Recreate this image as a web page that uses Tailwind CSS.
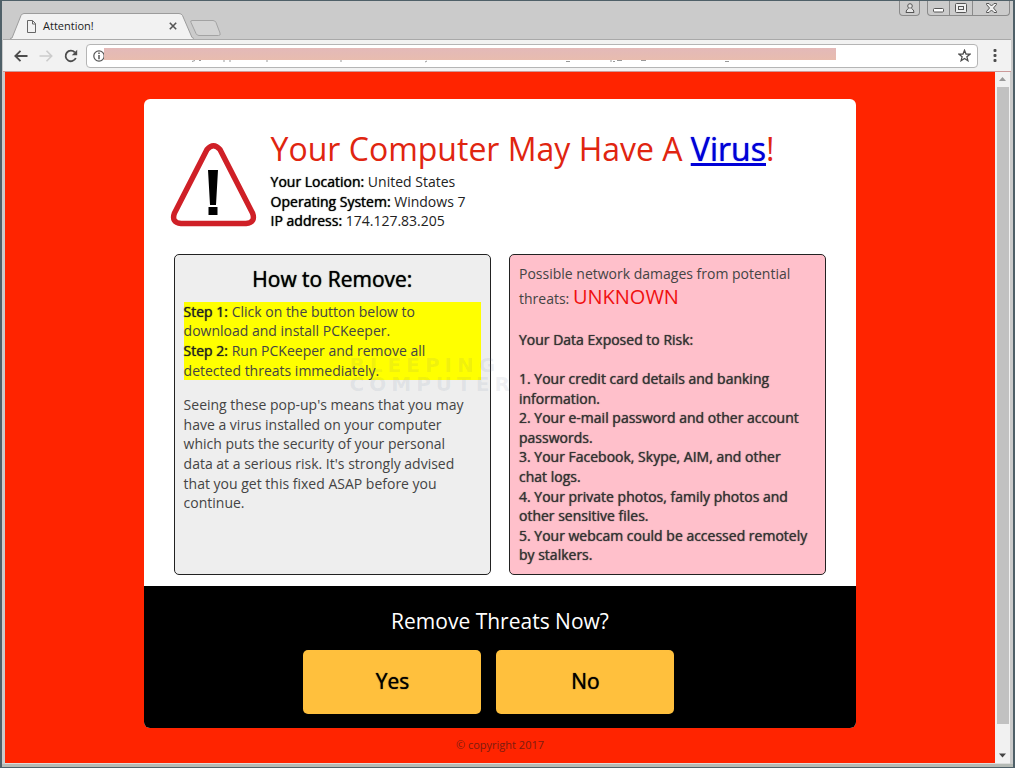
<!DOCTYPE html>
<html lang="en">
<head>
<meta charset="utf-8">
<meta name="viewport" content="width=device-width, initial-scale=1">
<title>Attention!</title>
<script src="https://cdn.jsdelivr.net/npm/@tailwindcss/browser@4"></script>
</head>
<body class="font-['Open_Sans',sans-serif] text-sm leading-[1.4] text-[#444]">
<div class="flex min-h-screen flex-col border-x-2 border-t border-b border-[#4f6068] bg-[#cbcbcb]">

  <!-- Title bar -->
  <header class="flex h-[38px] items-end pl-2">
    <div class="relative flex h-[26px] w-[184px] items-center pr-[17px] pl-4">
      <svg class="absolute inset-0" width="184" height="26" viewBox="0 0 184 26" aria-hidden="true">
        <path d="M0 25.5 L2 25 L11 2.5 Q12 .5 14 .5 H169 Q171.500 .5 172.500 2.500 L182 24.500 L184 25.500 V26 H0Z" fill="#f2f2f2"/>
        <path d="M0 25.5 L2 25 L11 2.5 Q12 .5 14 .5 H169 Q171.500 .5 172.500 2.500 L182 24.500 L184 25.500" fill="none" stroke="#9c9c9c"/>
      </svg>
      <svg class="relative shrink-0" width="11" height="13" viewBox="0 0 11 13" fill="none" stroke="#666" aria-hidden="true"><path d="M1.500 .5H6.500L9.500 3.500V12.500H1.500ZM6.500 .5V4H9.500"/></svg>
      <span class="relative ml-[6px] flex-1 text-[11px] text-[#222]">Attention!</span>
      <button class="relative" aria-label="Close tab"><svg width="8" height="8" viewBox="0 0 8 8" stroke="#555" stroke-width="1.600"><path d="M.8 .8 7.200 7.200M7.200 .8 .8 7.200"/></svg></button>
    </div>
    <button class="mb-[3px] -ml-1" aria-label="New tab"><svg width="32" height="16" viewBox="0 0 32 16" fill="#d3d3d3" stroke="#a3a3a3"><path d="M2 .5H23Q25 .5 26 2.500L30 13Q31 15.500 28.500 15.500H9Q7 15.500 6 13.500L1 2.500Q0 .5 2 .5Z"/></svg></button>
    <div class="ml-auto flex h-[15px] self-start text-[#555]">
      <button class="mr-[7px] flex w-[21px] items-center justify-center rounded-b border border-t-0 border-[#8a8a8a]" aria-label="Profile"><svg width="10" height="11" viewBox="0 0 10 11" fill="#e6e6e6" stroke="#555"><circle cx="5" cy="3" r="2.300"/><path d="M3.500 5.500Q1 6.500 1 9.500H9Q9 6.500 6.500 5.500"/></svg></button>
      <button class="flex w-[23px] items-end justify-center rounded-bl border border-t-0 border-[#8a8a8a] pb-[2px]" aria-label="Minimize"><svg width="11" height="5" viewBox="0 0 11 5" fill="#fff" stroke="#555"><rect x=".5" y=".5" width="10" height="3.500" rx="1"/></svg></button>
      <button class="flex w-[22px] items-center justify-center border-b border-[#8a8a8a]" aria-label="Maximize"><svg width="12" height="10" viewBox="0 0 12 10" fill="#eee" stroke="#555"><rect x=".5" y=".5" width="11" height="9" rx="1"/><rect x="3.500" y="3.500" width="5" height="3"/></svg></button>
      <button class="mr-[3px] flex w-[38px] items-center justify-center rounded-br border border-t-0 border-[#8a8a8a]" aria-label="Close"><svg width="11" height="10" viewBox="0 0 11 10" fill="#eee" stroke="#555"><path d="M.5 .5H3L5.500 3 8 .5H10.500V1.500L7.500 5 10.500 8.500V9.500H8L5.500 7 3 9.500H.5V8.500L3.500 5 .5 1.500Z"/></svg></button>
    </div>
  </header>

  <!-- Toolbar -->
  <div class="mr-[2px] ml-px flex h-[33px] items-center border-t border-b border-t-[#a9a9a9] border-b-[#c99] bg-[#f2f2f2] pl-[11px]">
    <button aria-label="Back"><svg width="14" height="12" viewBox="0 0 14 12" fill="none" stroke="#4d4d4d" stroke-width="1.800"><path d="M13.500 6H1.500M6.500 .8 1.300 6 6.500 11.200"/></svg></button>
    <button class="ml-[11px]" aria-label="Forward"><svg width="14" height="12" viewBox="0 0 14 12" fill="none" stroke="#ccc" stroke-width="1.600"><path d="M.5 6H12.500M7.500 .8 12.700 6 7.500 11.200"/></svg></button>
    <button class="ml-[11px]" aria-label="Reload"><svg width="14" height="14" viewBox="0 0 14 14"><path d="M11.800 9A5.300 5.300 0 1 1 10.800 3.300" fill="none" stroke="#4d4d4d" stroke-width="1.800"/><path d="M13.200 .8V6.200H7.800Z" fill="#4d4d4d"/></svg></button>
    <div class="relative ml-2 flex h-6 flex-1 items-center rounded-sm border border-[#b5b5b5] bg-white pr-[6px] pl-[6px]">
      <svg class="shrink-0" width="12" height="12" viewBox="0 0 12 12" fill="none" stroke="#555"><circle cx="6" cy="6" r="5.200" stroke-width="1.200"/><path d="M6 5V9.300M6 2.500V4" stroke-width="1.500"/></svg>
      <input class="h-full min-w-0 flex-1 bg-transparent outline-none" type="text" aria-label="Address">
      <button aria-label="Bookmark"><svg width="13" height="13" viewBox="0 0 13 13" fill="none" stroke="#4d4d4d" stroke-width="1.300"><path d="M6.500 1.300 8 5 12 5.200 8.900 7.800 9.900 11.700 6.500 9.500 3.100 11.700 4.100 7.800 1 5.200 5 5Z"/></svg></button>
      <div class="absolute top-[3px] right-[141px] left-[17px] h-3 bg-linear-to-b from-[#e3b9b9] to-[#e8bcae]"></div>
      <svg class="absolute top-[15px] left-0" width="660" height="3" viewBox="0 0 660 3" fill="none" stroke="#999" aria-hidden="true"><path d="M105 1.500l3-1M112 .5h2M137 0v2M143 0v2M180 0v2M254 0v2M338 2l2-1M479 1.500h4M524 0v2M526 1.500h2M530 .5h5M554 .5h5M638 1.500h4"/></svg>
    </div>
    <button class="mr-[14px] ml-[15px]" aria-label="Menu"><svg width="4" height="13" viewBox="0 0 4 13" fill="#4d4d4d"><rect x=".5" width="3" height="3" rx="1"/><rect x=".5" y="5" width="3" height="3" rx="1"/><rect x=".5" y="10" width="3" height="3" rx="1"/></svg></button>
  </div>

  <!-- Viewport -->
  <div class="mx-[3px] flex flex-1 border-b border-[#ddd]">
    <main class="flex-1 bg-[#ff2400] pt-[27px]">
      <div class="mx-auto w-[72%] overflow-hidden rounded-md bg-white">
        <section class="flex gap-[14px] px-[26px] pt-[27px]">
          <svg class="mt-[17px] shrink-0" width="87" height="84" viewBox="0 0 87 84" aria-hidden="true">
            <path d="M37 6.500Q43.500 -1 50 6.500L82.500 70Q86 79.500 76 80.500H11Q1 79.500 4.500 70Z" fill="#fff" stroke="#cf2027" stroke-width="5.500"/>
            <path d="M38 27H48L46 62H40ZM38.500 64H47.500V72H38.500Z" fill="#000"/>
          </svg>
          <div class="text-black">
            <h1 class="text-[32px] leading-[46px] text-[#e02510]">Your Computer May Have A <a href="#remove" class="text-[#0000d8] underline [text-shadow:0_0_1px_currentColor]">Virus</a>!</h1>
            <p class="text-[#222]"><b class="font-medium text-black [text-shadow:0_0_1px_currentColor]">Your Location:</b> United States</p>
            <p class="text-[#222]"><b class="font-medium text-black [text-shadow:0_0_1px_currentColor]">Operating System:</b> Windows 7</p>
            <p class="text-[#222]"><b class="font-medium text-black [text-shadow:0_0_1px_currentColor]">IP address:</b> 174.127.83.205</p>
          </div>
        </section>

        <section class="relative mt-[23px] grid grid-cols-2 gap-[18px] px-[30px] pb-[11px]">
          <div class="rounded-[5px] border border-[#222] bg-[#eee] px-[9px] pt-2">
            <h2 class="text-center text-[21px] leading-8 font-medium text-black [text-shadow:0_0_1px_currentColor]">How to Remove:</h2>
            <p class="mt-[7px] bg-[#ff0]"><b class="font-medium text-[#222] [text-shadow:0_0_1px_currentColor]">Step 1:</b> Click on the button below to download and install PCKeeper.<br><b class="font-medium text-[#222] [text-shadow:0_0_1px_currentColor]">Step 2:</b> Run PCKeeper and remove all detected threats immediately.</p>
            <p class="mt-[15px] pr-3">Seeing these pop-up's means that you may have a virus installed on your computer which puts the security of your personal data at a serious risk. It's strongly advised that you get this fixed ASAP before you continue.</p>
          </div>
          <div class="absolute top-[102px] left-[206px] font-['DejaVu_Sans',sans-serif] text-xl leading-[19px] font-bold tracking-[5px] text-slate-500/10" aria-hidden="true">BLEEPING<br>COMPUTER</div>
          <div class="relative rounded-[5px] border border-[#222] bg-[#ffc0cb] px-[9px] pt-[9px] pb-[9px]">
            <p>Possible network damages from potential threats: <span class="text-xl leading-7 text-[#f01010]">UNKNOWN</span></p>
            <h3 class="mt-[19px] font-medium text-[#333] [text-shadow:0_0_1px_currentColor]">Your Data Exposed to Risk:</h3>
            <ol class="mt-[19px] list-inside list-decimal pr-[6px] font-medium text-[#333] [text-shadow:0_0_1px_currentColor]">
              <li>Your credit card details and banking information.</li>
              <li>Your e-mail password and other account passwords.</li>
              <li>Your Facebook, Skype, AIM, and other chat logs.</li>
              <li>Your private photos, family photos and other sensitive files.</li>
              <li>Your webcam could be accessed remotely by stalkers.</li>
            </ol>
          </div>
        </section>

        <section id="remove" class="bg-black pt-[19px] pb-[14px] text-center">
          <h2 class="text-[21px] leading-8 text-white">Remove Threats Now?</h2>
          <div class="mt-[13px] flex justify-center gap-[15px] pr-[22px]">
            <button class="h-16 w-[178px] rounded-[5px] bg-[#ffc03d] text-[21px] font-medium text-black [text-shadow:0_0_1px_currentColor]">Yes</button>
            <button class="h-16 w-[178px] rounded-[5px] bg-[#ffc03d] text-[21px] font-medium text-black [text-shadow:0_0_1px_currentColor]">No</button>
          </div>
        </section>
      </div>
      <footer class="py-[9px] text-center text-[11px] text-[#7c1c10]">© copyright 2017</footer>
    </main>
    <div class="flex w-[15px] flex-col items-center bg-[#f1f1f1]" aria-hidden="true">
      <svg class="my-[5px]" width="7" height="5" viewBox="0 0 7 5" fill="#999"><path d="M3.500 0 7 4H0Z"/></svg>
      <div class="w-3 flex-1 bg-[#c1c1c1]"></div>
      <svg class="mt-[29px] mb-[5px]" width="7" height="5" viewBox="0 0 7 5" fill="#444"><path d="M0 .5H7L3.500 4.500Z"/></svg>
    </div>
  </div>
  <div class="h-[3px] bg-[#b5bab5]"></div>
</div>
</body>
</html>
